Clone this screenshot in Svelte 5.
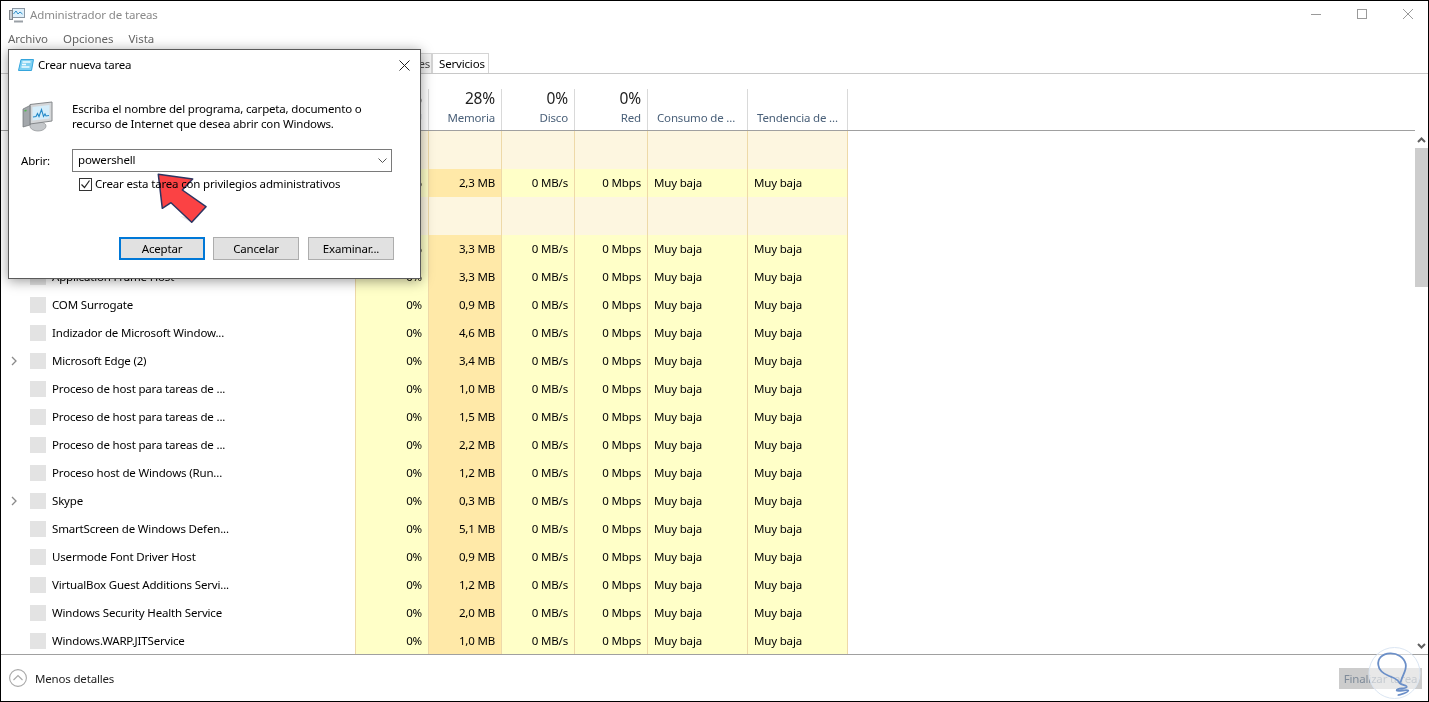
<script>
  const rows = [
    { name: '', cpu: '0%', mem: '3,3 MB' },
    { name: 'Application Frame Host', cpu: '0%', mem: '3,3 MB' },
    { name: 'COM Surrogate', cpu: '0%', mem: '0,9 MB' },
    { name: 'Indizador de Microsoft Window...', cpu: '0%', mem: '4,6 MB' },
    { name: 'Microsoft Edge (2)', cpu: '0%', mem: '3,4 MB', exp: true },
    { name: 'Proceso de host para tareas de ...', cpu: '0%', mem: '1,0 MB' },
    { name: 'Proceso de host para tareas de ...', cpu: '0%', mem: '1,5 MB' },
    { name: 'Proceso de host para tareas de ...', cpu: '0%', mem: '2,2 MB' },
    { name: 'Proceso host de Windows (Run...', cpu: '0%', mem: '1,2 MB' },
    { name: 'Skype', cpu: '0%', mem: '0,3 MB', exp: true },
    { name: 'SmartScreen de Windows Defen...', cpu: '0%', mem: '5,1 MB' },
    { name: 'Usermode Font Driver Host', cpu: '0%', mem: '0,9 MB' },
    { name: 'VirtualBox Guest Additions Servi...', cpu: '0%', mem: '1,2 MB' },
    { name: 'Windows Security Health Service', cpu: '0%', mem: '2,0 MB' },
    { name: 'Windows.WARP.JITService', cpu: '0%', mem: '1,0 MB' }
  ];
</script>

{#snippet cells(cpu, mem)}
  <span class="c num cpu">{cpu}</span>
  <span class="c num mem">{mem}</span>
  <span class="c num net">0 MB/s</span>
  <span class="c num net">0 Mbps</span>
  <span class="c txt wide net">Muy baja</span>
  <span class="c txt wide net">Muy baja</span>
{/snippet}

{#snippet group(h)}
  <div class="row group" style={`height:${h}px`}>
    <span class="first"></span>
    <span class="c g"></span><span class="c g"></span><span class="c g"></span><span class="c g"></span>
    <span class="c g wide"></span><span class="c g wide"></span>
  </div>
{/snippet}

<div class="win">
  <header class="title">
    <svg class="appicon" width="16" height="16" viewBox="0 0 16 16">
      <rect x="3.5" y="1.5" width="12" height="9" fill="#dff0fb" stroke="#8b97a3"/>
      <path d="M4.5 7l2.500-3 2 3 2-2 2.500 2" fill="none" stroke="#2f8fc8"/>
      <rect x="0.500" y="3.500" width="3" height="9" fill="#c9ced3" stroke="#80868c"/>
      <path d="M5 14.500h9" stroke="#9aa0a6" stroke-width="2"/>
    </svg>
    <span class="t">Administrador de tareas</span>
    <div class="wbtns">
      <svg width="10" height="10" viewBox="0 0 10 10"><path d="M0 5.500h10" stroke="#9a9a9a"/></svg>
      <svg width="10" height="10" viewBox="0 0 10 10"><rect x=".5" y=".5" width="9" height="9" fill="none" stroke="#9a9a9a"/></svg>
      <svg width="10" height="10" viewBox="0 0 10 10"><path d="M0 0l10 10M10 0L0 10" stroke="#9a9a9a"/></svg>
    </div>
  </header>
  <nav class="menu"><span>Archivo</span><span>Opciones</span><span>Vista</span></nav>
  <div class="tabs">
    <span class="tab off">Detalles</span>
    <span class="tab on">Servicios</span>
  </div>

  <div class="main">
    <div class="list">
      <div class="head">
        <span class="first"></span>
        <div class="h"><b>0%</b><i>CPU</i></div>
        <div class="h"><b>28%</b><i>Memoria</i></div>
        <div class="h"><b>0%</b><i>Disco</i></div>
        <div class="h"><b>0%</b><i>Red</i></div>
        <div class="h wide"><b>&nbsp;</b><i class="l">Consumo de ...</i></div>
        <div class="h wide"><b>&nbsp;</b><i class="l">Tendencia de ...</i></div>
      </div>
      <div class="body">
        {@render group(38)}
        <div class="row">
          <span class="first"></span>
          {@render cells('0%', '2,3 MB')}
        </div>
        {@render group(38)}
        {#each rows as r}
          <div class="row">
            <span class="first">
              <span class="chev">
                {#if r.exp}
                  <svg width="6" height="10" viewBox="0 0 6 10"><path d="M1 1l4 4-4 4" fill="none" stroke="#8a8a8a" stroke-width="1.300"/></svg>
                {/if}
              </span>
              <span class="ic"></span>
              <span class="nm">{r.name}</span>
            </span>
            {@render cells(r.cpu, r.mem)}
          </div>
        {/each}
      </div>
    </div>
    <div class="sb">
      <svg width="9" height="6" viewBox="0 0 9 6"><path d="M1 5l3.500-3.500L8 5" fill="none" stroke="#606060" stroke-width="2"/></svg>
      <span class="thumb"></span>
      <svg class="dn" width="9" height="6" viewBox="0 0 9 6"><path d="M1 1l3.500 3.500L8 1" fill="none" stroke="#606060" stroke-width="2"/></svg>
    </div>
  </div>

  <footer class="foot">
    <svg width="18" height="18" viewBox="0 0 18 18"><circle cx="9" cy="9" r="8.400" fill="none" stroke="#a8a8a8" stroke-width="1.100"/><path d="M4.500 11l4.500-4.500 4.500 4.500" fill="none" stroke="#a8a8a8" stroke-width="1.100"/></svg>
    <span class="md">Menos detalles</span>
    <span class="end">Finalizar tarea</span>
  </footer>
</div>

<section class="dlg">
  <div class="dt">
    <svg width="16" height="12" viewBox="0 0 16 12">
      <path d="M3 .5h12.500l-2 11H.5z" fill="#7fd0f2" stroke="#35a5dc"/>
      <path d="M4.500 3h8M4 5.500h4M3.500 8h8" stroke="#f2fbff" stroke-width="1.300"/>
    </svg>
    <span>Crear nueva tarea</span>
    <svg class="x" width="11" height="11" viewBox="0 0 11 11"><path d="M.5.5l10 10M10.500.5l-10 10" stroke="#222" stroke-width="1"/></svg>
  </div>
  <div class="intro">
    <svg width="32" height="32" viewBox="0 0 32 32">
      <path d="M8 25c0-3 4-4 8-4s8 1 8 4-4 5-8 5-8-2-8-5z" fill="#c4c7ca" stroke="#8f9295" stroke-width=".7"/>
      <path d="M8 3.500L30 1v19L8 23z" fill="#d4d6d8" stroke="#85888b"/>
      <path d="M10.500 6L27.500 4v13.500l-17 2z" fill="#d5edfa"/>
      <path d="M11 16l3-.5 1.500-3 1.500 3 2.500-7 2 7 1.500-2.500 1 2 3-.5" fill="none" stroke="#2389c8" stroke-width="1.100"/>
      <path d="M1 8l7-3.500V24l-7 2z" fill="#a3a7ab" stroke="#6e7276" stroke-width=".7"/>
      <path d="M2.500 10l2-.8" stroke="#53b553" stroke-width="1.500"/>
    </svg>
    <p>Escriba el nombre del programa, carpeta, documento o<br />recurso de Internet que desea abrir con Windows.</p>
  </div>
  <div class="open">
    <label for="cmd">Abrir:</label>
    <div class="combo">
      <input id="cmd" value="powershell" />
      <svg width="9" height="6" viewBox="0 0 9 6"><path d="M.5.5l4 4 4-4" fill="none" stroke="#555" /></svg>
    </div>
  </div>
  <div class="chk">
    <span class="box"><svg width="11" height="11" viewBox="0 0 11 11"><path d="M1.500 5.500l3 3 5-7" fill="none" stroke="#222" stroke-width="1.200"/></svg></span>
    <span>Crear esta tarea con privilegios administrativos</span>
  </div>
  <div class="btns">
    <button class="pri">Aceptar</button>
    <button>Cancelar</button>
    <button class="ex">Examinar...</button>
  </div>
</section>

<svg class="arrow" width="60" height="60" viewBox="0 0 60 60">
  <path d="M30 46l12 7 8-8-8 3z" fill="#000" opacity=".1"/>
  <path d="M8.300 4.300L42.700 9 32.300 20 56 36.700 41.700 52.300 21 32.700 12.300 38.300z" fill="#fb4244" stroke="#2d3561" stroke-width="1.500" stroke-linejoin="round"/>
</svg>

<svg class="mark" width="54" height="54" viewBox="0 0 54 54">
  <circle cx="27.500" cy="27" r="25.500" fill="#fff" fill-opacity=".55" stroke="#dbe6f3"/>
  <path d="M33.700 35.700C36 28 40 24 38.700 18 37 11 30 7 23 7.300 15 7.500 10.500 13 11.300 19 12 25 17 28 22 30 27 32 31 33 32.500 37 35 39.500 40 39 39.700 41 39 43 29 42 29.700 44.500 30.500 46 41 43 41.300 44.500 41 47 35 48 31.300 49" fill="none" stroke="#6b8fc8" stroke-width="1.800" stroke-linecap="round"/>
</svg>

<style>
  :global(body) { margin: 0; background: #fff; }
  :global(html, body) { overflow: hidden; }
  .win {
    width: 1429px; height: 702px; box-sizing: border-box; border: 1px solid #000;
    display: flex; flex-direction: column; background: #fff; color: #000;
    font: 11.5px/16px "Noto Sans", sans-serif; letter-spacing: -.17px;
  }
  .title { height: 27px; flex: none; display: flex; align-items: center; padding-left: 8px; gap: 5px; }
  .t { color: #8a8a8a; letter-spacing: -.13px; }
  .wbtns { margin-left: auto; display: flex; gap: 36px; margin-right: 15px; margin-bottom: 2px; }
  .menu { height: 22px; flex: none; display: flex; gap: 15px; padding-left: 7px; align-items: center; color: #666; letter-spacing: -.03px; }
  .tabs { height: 23px; flex: none; display: flex; padding-left: 380px; align-items: flex-end; border-bottom: 1px solid #c8c8c8; }
  .tab { height: 20px; box-sizing: border-box; padding: 2px 6px 0; border: 1px solid #d4d4d4; border-bottom: 0; }
  .off { width: 51px; background: #f2f2f2; color: #444; }
  .on { width: 57px; background: #fff; }
  .main { flex: 1; min-height: 0; display: flex; border-bottom: 1px solid #a0a0a0; }
  .list { flex: 1; min-width: 0; overflow: hidden; display: flex; flex-direction: column; }
  .head, .row { display: grid; grid-template-columns: 355px repeat(4, 73px) 100px 100px; }
  .head { height: 56px; flex: none; border-bottom: 1px solid #a0a0a0; }
  .h { display: flex; flex-direction: column; align-items: flex-end; margin-top: 15px; padding: 0 6px; border-right: 1px solid #d9d9d9; }
  .h.wide { align-items: flex-start; padding-left: 9px; }
  .h b { font-weight: 400; font-size: 15.5px; line-height: 18px; color: #222; }
  .h i { font-style: normal; color: #4a6079; margin-top: 3px; white-space: nowrap; }
  .body { flex: 1; min-height: 0; overflow: hidden; }
  .row { height: 28px; align-items: stretch; }
  .first { display: flex; align-items: center; }
  .chev { width: 29px; padding-left: 10px; box-sizing: border-box; display: flex; align-items: center; }
  .ic { width: 16px; height: 16px; background: #e3e3e3; margin-right: 6px; flex: none; }
  .nm { white-space: nowrap; }
  .c { display: flex; align-items: center; border-right: 1px solid #eed9a8; padding: 0 6px; white-space: nowrap; }
  .num { justify-content: flex-end; }
  .cpu { background: #ffffc8; border-left: 1px solid #eed9a8; margin-left: -1px; }
  .mem { background: #ffe9a8; }
  .net { background: #ffffc8; }
  .g { background: #fdf6e0; }
  .group .g:first-of-type { border-left: 1px solid #eed9a8; margin-left: -1px; }
  .sb { width: 13px; flex: none; display: flex; flex-direction: column; align-items: center; padding-top: 63px; box-sizing: border-box; }
  .sb svg { flex: none; }
  .thumb { width: 13px; height: 139px; background: #cdcdcd; margin-top: 5px; flex: none; }
  .dn { margin-top: auto; margin-bottom: 5px; }
  .foot { height: 46px; flex: none; display: flex; align-items: center; padding: 0 6px 0 8px; gap: 8px; color: #222; }
  .md { padding-top: 1px; }
  .end { margin-left: auto; width: 83px; height: 21px; background: #cccccc; color: #7f8b99; text-align: center; line-height: 21px; }

  .dlg {
    position: absolute; left: 8px; top: 49px; width: 413px; height: 230px; box-sizing: border-box;
    background: #fff; border: 1px solid #5a5a5a; box-shadow: 0 2px 12px rgba(0,0,0,.4);
    font: 11.5px/16px "Noto Sans", sans-serif; letter-spacing: -.17px; color: #000;
    display: flex; flex-direction: column; padding: 0 26px 18px 12px;
  }
  .dt { height: 28px; margin-top: 1px; display: flex; align-items: center; gap: 4px; margin-right: -16px; margin-left: -3px; }
  .dt .x { margin-left: auto; }
  .intro { display: flex; gap: 18px; margin-top: 16px; align-items: flex-start; margin-left: 1px; height: 52px; }
  .intro svg { margin-top: 6px; flex: none; }
  .intro p { margin: 6px 0 0; line-height: 15px; white-space: nowrap; }
  .open { display: flex; align-items: center; margin-top: 2px; }
  .open label { width: 51px; }
  .combo { width: 320px; height: 23px; box-sizing: border-box; border: 1px solid #7a7a7a; display: flex; align-items: center; padding: 0 4px 0 5px; margin-right: -14px; }
  .combo input { flex: 1; min-width: 0; border: 0; outline: 0; padding: 0 0 2px; font: inherit; letter-spacing: inherit; color: #000; background: none; }
  .chk { display: flex; align-items: center; gap: 3px; margin: 4px 0 0 58px; white-space: nowrap; }
  .box { width: 13px; height: 13px; box-sizing: border-box; border: 1px solid #333; display: flex; align-items: center; justify-content: center; }
  .btns { display: flex; gap: 8px; margin-top: auto; justify-content: flex-end; }
  .ex { margin-left: 1px; }
  button { width: 86px; height: 23px; box-sizing: border-box; padding: 0; background: #e1e1e1; border: 1px solid #adadad; font: inherit; letter-spacing: inherit; color: #000; }
  .pri { border: 2px solid #0078d7; }
  .arrow { position: absolute; left: 150px; top: 170px; mix-blend-mode: multiply; }
  .mark { position: absolute; left: 1367px; top: 646px; }
</style>
